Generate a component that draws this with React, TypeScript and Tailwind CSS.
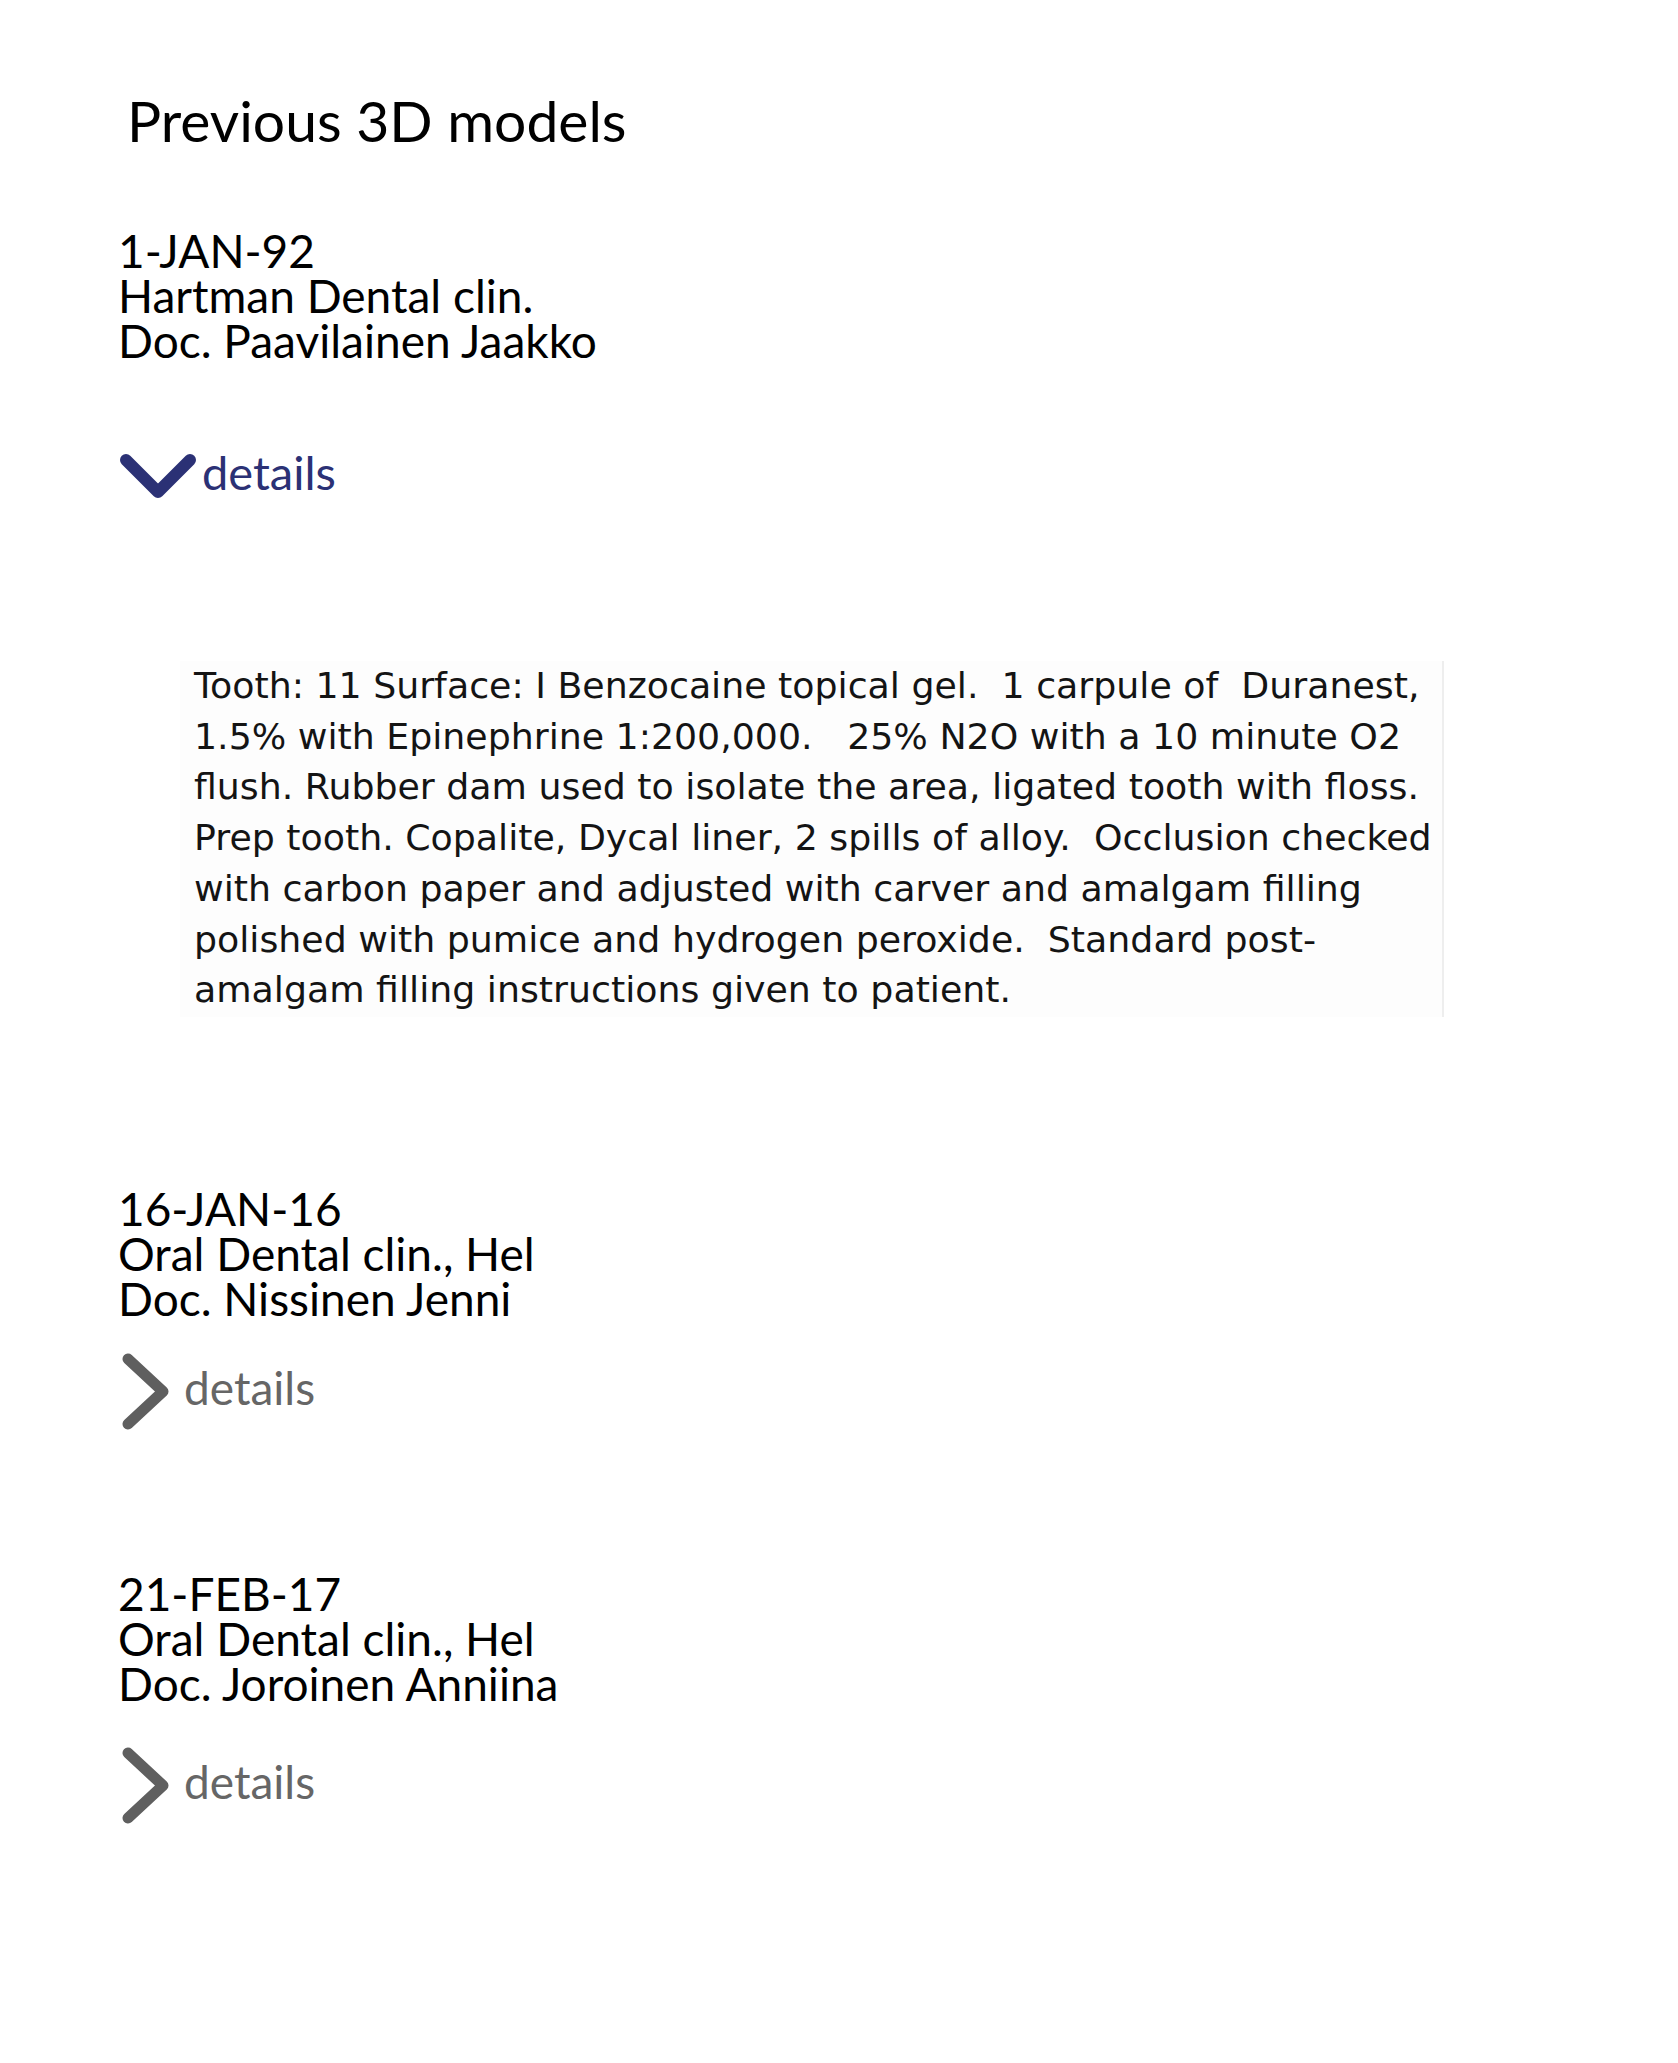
import React from "react";

const sans = { fontFamily: "Lato, 'Open Sans', sans-serif" };

function ChevronDown() {
  return (
    <svg width="76" height="44" viewBox="0 0 76 44" className="shrink-0">
      <polyline points="6,6 38,38 70,6" fill="none" stroke="#2b3175" strokeWidth="12" strokeLinecap="round" strokeLinejoin="round" />
    </svg>
  );
}

function ChevronRight() {
  return (
    <svg width="48" height="77" viewBox="0 0 48 77" className="shrink-0">
      <polyline points="6,6 41,38.5 6,71" fill="none" stroke="#5f5f5f" strokeWidth="11" strokeLinecap="round" strokeLinejoin="round" />
    </svg>
  );
}

function Entry({ date, clinic, doc }: { date: string; clinic: string; doc: string }) {
  return (
    <div className="pl-[3px] text-[46px] leading-[45px] text-black" style={sans}>
      <div>{date}</div>
      <div>{clinic}</div>
      <div>{doc}</div>
    </div>
  );
}

function CollapsedDetails({ mt }: { mt: string }) {
  return (
    <div className={`flex items-start ${mt}`}>
      <div className="ml-[7px]">
        <ChevronRight />
      </div>
      <div className="ml-[14px] mt-[10px] text-[46px] leading-[50px] text-[#666666]" style={sans}>
        details
      </div>
    </div>
  );
}

const lines = [
  "Tooth: 11 Surface: I Benzocaine topical gel.  1 carpule of  Duranest,",
  "1.5% with Epinephrine 1:200,000.   25% N2O with a 10 minute O2",
  "flush. Rubber dam used to isolate the area, ligated tooth with floss.",
  "Prep tooth. Copalite, Dycal liner, 2 spills of alloy.  Occlusion checked",
  "with carbon paper and adjusted with carver and amalgam filling",
  "polished with pumice and hydrogen peroxide.  Standard post-",
  "amalgam filling instructions given to patient.",
];

export default function App() {
  return (
    <div className="min-h-[2063px] w-full bg-white pl-[115px]">
      <div className="pt-[92px] pl-[12px] text-[57px] leading-[56px] text-black" style={sans}>
        Previous 3D models
      </div>

      <div className="mt-[80px]">
        <Entry date="1-JAN-92" clinic="Hartman Dental clin." doc="Doc. Paavilainen Jaakko" />
      </div>

      <div className="mt-[86px] flex items-start">
        <div className="ml-[5px] mt-[5px]">
          <ChevronDown />
        </div>
        <div className="ml-[6px] text-[47px] leading-[46px] text-[#2b3175]" style={sans}>
          details
        </div>
      </div>

      <div
        className="mt-[163px] ml-[65px] w-[1264px] bg-[#fdfdfd] border-r-2 border-[#eeeeee] pb-[1px] pl-[14px] text-[#141414]"
        style={{ fontFamily: "'DejaVu Sans', Verdana, sans-serif" }}
      >
        {lines.map((l, i) => (
          <div key={i} className="whitespace-pre text-[36.3px] leading-[50.7px]">
            {l}
          </div>
        ))}
      </div>

      <div className="mt-[169px]">
        <Entry date="16-JAN-16" clinic="Oral Dental clin., Hel" doc="Doc. Nissinen Jenni" />
      </div>
      <CollapsedDetails mt="mt-[32px]" />

      <div className="mt-[141px]">
        <Entry date="21-FEB-17" clinic="Oral Dental clin., Hel" doc="Doc. Joroinen Anniina" />
      </div>
      <CollapsedDetails mt="mt-[41px]" />
    </div>
  );
}
